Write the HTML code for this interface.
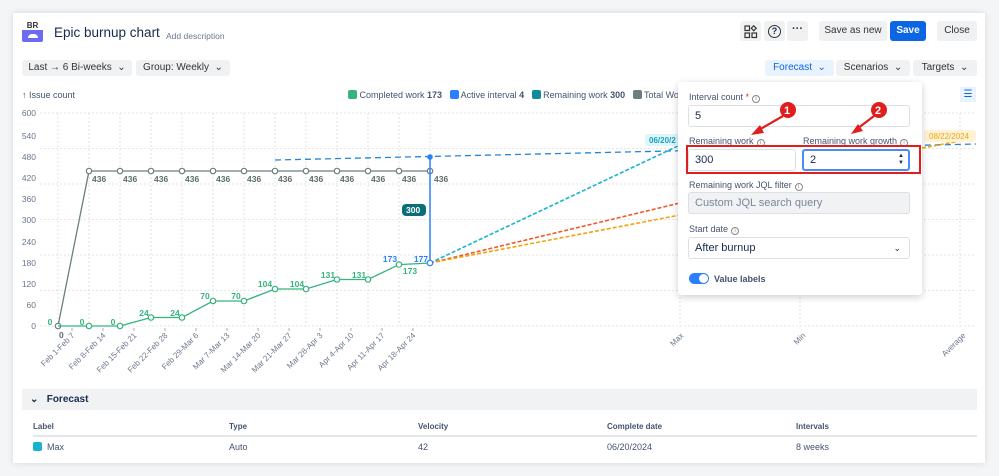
<!DOCTYPE html>
<html><head><meta charset="utf-8"><style>
*{box-sizing:border-box;margin:0;padding:0}
body{width:999px;height:476px;background:#f4f5f6;font-family:"Liberation Sans",sans-serif;color:#172b4d;position:relative;overflow:hidden}
.card{position:absolute;left:13px;top:13px;width:972px;height:450px;background:#fff;box-shadow:0 0 6px rgba(0,0,0,.12)}
.abs{position:absolute}
.btn{position:absolute;background:#f0f1f3;border-radius:3px;font-size:10px;color:#333;text-align:center;white-space:nowrap}
.ff{font-size:9px;color:#44546f}
.inp{position:absolute;border:1px solid #dcdfe4;border-radius:3px;height:22px;font-size:11px;line-height:20px;padding-left:6px;background:#fff}
.lab{position:absolute;font-size:9px;color:#44546f;white-space:nowrap;line-height:10px}
.i{display:inline-block;width:8px;height:8px;border:1px solid #888;border-radius:50%;font-size:6px;line-height:6px;text-align:center;vertical-align:0;margin-left:3px;color:#888}
</style></head><body>
<div class="card"></div>
<!-- logo -->
<div class="abs" style="left:22px;top:22px;width:21px;height:20px;background:#6c6cf0;border-radius:2px"></div>
<div class="abs" style="left:22px;top:21px;width:21px;height:9px;background:#fff;font-size:8px;font-weight:bold;color:#333;text-align:center;line-height:9px">BR</div>
<div class="abs" style="left:28px;top:34px;width:10px;height:4px;background:#fff;border-radius:4px 4px 0 0"></div>
<div class="abs" style="left:54px;top:25px;font-size:13.5px;color:#172b4d">Epic burnup chart</div>
<div class="abs" style="left:166px;top:31px;font-size:8.5px;color:#6b778c">Add description</div>
<!-- top right -->
<div class="btn" style="left:740px;top:21px;width:21px;height:20px"></div>
<svg class="abs" style="left:744px;top:25px" width="14" height="14"><g fill="none" stroke="#333" stroke-width="1.2"><rect x="1" y="1" width="4.5" height="4.5"/><rect x="1" y="8" width="4.5" height="4.5"/><rect x="8" y="8" width="4.5" height="4.5"/><rect x="8" y="1.5" width="3.5" height="3.5" transform="rotate(45 9.75 3.25)"/></g></svg>
<div class="btn" style="left:764px;top:21px;width:21px;height:20px"></div>
<div class="abs" style="left:768px;top:25px;width:13px;height:13px;border:1.3px solid #333;border-radius:50%;font-size:9px;text-align:center;line-height:11px;font-weight:bold">?</div>
<div class="btn" style="left:787px;top:21px;width:21px;height:20px;font-size:11px;line-height:16px;font-weight:bold">···</div>
<div class="btn" style="left:819px;top:21px;width:68px;height:20px;line-height:20px">Save as new</div>
<div class="btn" style="left:890px;top:21px;width:36px;height:20px;line-height:20px;background:#0c66e4;color:#fff;font-weight:bold">Save</div>
<div class="btn" style="left:937px;top:21px;width:40px;height:20px;line-height:20px">Close</div>
<!-- filters -->
<div class="btn" style="left:22px;top:60px;width:110px;height:16px;line-height:16px">Last → 6 Bi-weeks &nbsp;⌄</div>
<div class="btn" style="left:136px;top:60px;width:94px;height:16px;line-height:16px">Group: Weekly &nbsp;⌄</div>
<div class="btn" style="left:765px;top:60px;width:69px;height:16px;line-height:16px;background:#e9f2ff;color:#0c66e4">Forecast &nbsp;⌄</div>
<div class="btn" style="left:836px;top:60px;width:74px;height:16px;line-height:16px">Scenarios &nbsp;⌄</div>
<div class="btn" style="left:913px;top:60px;width:64px;height:16px;line-height:16px">Targets &nbsp;⌄</div>
<div class="abs ff" style="left:22px;top:90px">↑ Issue count</div>
<div class="abs ff" style="left:348px;top:90px;white-space:nowrap">
<span style="display:inline-block;width:9px;height:9px;background:#36b37e;border-radius:2px;vertical-align:-1px"></span> Completed work <b>173</b>&nbsp;&nbsp;
<span style="display:inline-block;width:9px;height:9px;background:#2b7fff;border-radius:2px;vertical-align:-1px"></span> Active interval <b>4</b>&nbsp;&nbsp;
<span style="display:inline-block;width:9px;height:9px;background:#138a9a;border-radius:2px;vertical-align:-1px"></span> Remaining work <b>300</b>&nbsp;&nbsp;
<span style="display:inline-block;width:9px;height:9px;background:#6b7f7f;border-radius:2px;vertical-align:-1px"></span> Total Work</div>
<div class="abs" style="left:960px;top:87px;width:16px;height:15px;background:#e9f2ff;color:#0c66e4;font-size:10px;text-align:center;line-height:15px">☰</div>
<!-- chart -->
<svg class="abs" style="left:0;top:0" width="999" height="390" font-family="Liberation Sans" font-size="8.5">
<g stroke="#ddd" stroke-dasharray="2,2" stroke-width="0.8">
<line x1="40" y1="113" x2="976" y2="113"/><line x1="40" y1="148.5" x2="976" y2="148.5"/><line x1="40" y1="184" x2="976" y2="184"/><line x1="40" y1="219.5" x2="976" y2="219.5"/><line x1="40" y1="255" x2="976" y2="255"/><line x1="40" y1="290.5" x2="976" y2="290.5"/><line x1="40" y1="326" x2="976" y2="326"/>
<line x1="58" y1="113" x2="58" y2="326"/><line x1="89" y1="113" x2="89" y2="326"/><line x1="120" y1="113" x2="120" y2="326"/><line x1="151" y1="113" x2="151" y2="326"/><line x1="182" y1="113" x2="182" y2="326"/><line x1="213" y1="113" x2="213" y2="326"/><line x1="244" y1="113" x2="244" y2="326"/><line x1="275" y1="113" x2="275" y2="326"/><line x1="306" y1="113" x2="306" y2="326"/><line x1="337" y1="113" x2="337" y2="326"/><line x1="368" y1="113" x2="368" y2="326"/><line x1="399" y1="113" x2="399" y2="326"/><line x1="430" y1="113" x2="430" y2="326"/><line x1="680" y1="113" x2="680" y2="326"/><line x1="800" y1="113" x2="800" y2="326"/><line x1="960" y1="113" x2="960" y2="326"/>
</g>
<g fill="#6b778c" text-anchor="end">
<text x="36" y="116">600</text><text x="36" y="139">540</text><text x="36" y="160">480</text><text x="36" y="181">420</text><text x="36" y="202">360</text><text x="36" y="223">300</text><text x="36" y="245">240</text><text x="36" y="266">180</text><text x="36" y="287">120</text><text x="36" y="308">60</text><text x="36" y="329">0</text>
</g>
<g fill="#6b778c" font-size="8" text-anchor="end">
<text transform="translate(75,336) rotate(-45)">Feb 1-Feb 7</text><text transform="translate(106,336) rotate(-45)">Feb 8-Feb 14</text><text transform="translate(137,336) rotate(-45)">Feb 15-Feb 21</text><text transform="translate(168,336) rotate(-45)">Feb 22-Feb 28</text><text transform="translate(199,336) rotate(-45)">Feb 29-Mar 6</text><text transform="translate(230,336) rotate(-45)">Mar 7-Mar 13</text><text transform="translate(261,336) rotate(-45)">Mar 14-Mar 20</text><text transform="translate(292,336) rotate(-45)">Mar 21-Mar 27</text><text transform="translate(323,336) rotate(-45)">Mar 28-Apr 3</text><text transform="translate(354,336) rotate(-45)">Apr 4-Apr 10</text><text transform="translate(385,336) rotate(-45)">Apr 11-Apr 17</text><text transform="translate(416,336) rotate(-45)">Apr 18-Apr 24</text><text transform="translate(684,336) rotate(-45)">Max</text><text transform="translate(806,336) rotate(-45)">Min</text><text transform="translate(966,336) rotate(-45)">Average</text>
</g>
<g stroke="#999" stroke-width="0.8"><line x1="72" y1="328" x2="72" y2="331"/><line x1="103" y1="328" x2="103" y2="331"/><line x1="134" y1="328" x2="134" y2="331"/><line x1="165" y1="328" x2="165" y2="331"/><line x1="196" y1="328" x2="196" y2="331"/><line x1="227" y1="328" x2="227" y2="331"/><line x1="258" y1="328" x2="258" y2="331"/><line x1="289" y1="328" x2="289" y2="331"/><line x1="320" y1="328" x2="320" y2="331"/><line x1="351" y1="328" x2="351" y2="331"/><line x1="382" y1="328" x2="382" y2="331"/><line x1="413" y1="328" x2="413" y2="331"/></g>
<!-- forecast lines -->
<line x1="275" y1="160" x2="976" y2="144" stroke="#2684d6" stroke-width="1.3" stroke-dasharray="6,4"/>
<line x1="430" y1="263" x2="680" y2="145" stroke="#17b3cf" stroke-width="1.6" stroke-dasharray="4,2"/>
<line x1="430" y1="263" x2="680" y2="203" stroke="#ef5a2a" stroke-width="1.6" stroke-dasharray="4,2"/>
<line x1="430" y1="263" x2="680" y2="215" stroke="#f2a30f" stroke-width="1.6" stroke-dasharray="4,2"/>
<line x1="922" y1="148" x2="960" y2="141" stroke="#f2a30f" stroke-width="1.6" stroke-dasharray="4,2"/>
<rect x="645" y="134" width="36" height="12" rx="3" fill="#e0f5fa"/><text x="649" y="143" fill="#17a2c0" font-weight="bold" font-size="8">06/20/2</text>
<rect x="924" y="130" width="52" height="12" rx="3" fill="#fff3d6"/><text x="929" y="139" fill="#f2a30f" font-size="8">08/22/2024</text>
<!-- total -->
<polyline fill="none" stroke="#6b7f7f" stroke-width="1.3" points="58,326 89,171 120,171 151,171 182,171 213,171 244,171 275,171 306,171 337,171 368,171 399,171 430,171"/>
<g fill="#fff" stroke="#6b7f7f" stroke-width="1.2"><circle cx="89" cy="171" r="2.7"/><circle cx="120" cy="171" r="2.7"/><circle cx="151" cy="171" r="2.7"/><circle cx="182" cy="171" r="2.7"/><circle cx="213" cy="171" r="2.7"/><circle cx="244" cy="171" r="2.7"/><circle cx="275" cy="171" r="2.7"/><circle cx="306" cy="171" r="2.7"/><circle cx="337" cy="171" r="2.7"/><circle cx="368" cy="171" r="2.7"/><circle cx="399" cy="171" r="2.7"/><circle cx="430" cy="171" r="2.7"/><circle cx="58" cy="326" r="2.7"/></g>
<g fill="#5e6c6c" font-weight="bold"><text x="92" y="182">436</text><text x="123" y="182">436</text><text x="154" y="182">436</text><text x="185" y="182">436</text><text x="216" y="182">436</text><text x="247" y="182">436</text><text x="278" y="182">436</text><text x="309" y="182">436</text><text x="340" y="182">436</text><text x="371" y="182">436</text><text x="402" y="182">436</text><text x="434" y="182">436</text><text x="59" y="338">0</text></g>
<!-- blue -->
<line x1="430" y1="157" x2="430" y2="263" stroke="#2b7fff" stroke-width="1.5"/>
<circle cx="430" cy="157" r="2.8" fill="#2b7fff"/>
<rect x="402" y="204" width="24" height="12" rx="4" fill="#0b6e78"/><text x="406" y="213" fill="#fff" font-weight="bold">300</text>
<!-- green -->
<polyline fill="none" stroke="#36b37e" stroke-width="1.3" points="58,326 89,326 120,326 151,317.5 182,317.5 213,301 244,301 275,289 306,289 337,279.5 368,279.5 399,264.6 430,263"/>
<g fill="#fff" stroke="#36b37e" stroke-width="1.2"><circle cx="89" cy="326" r="2.7"/><circle cx="120" cy="326" r="2.7"/><circle cx="151" cy="317.5" r="2.7"/><circle cx="182" cy="317.5" r="2.7"/><circle cx="213" cy="301" r="2.7"/><circle cx="244" cy="301" r="2.7"/><circle cx="275" cy="289" r="2.7"/><circle cx="306" cy="289" r="2.7"/><circle cx="337" cy="279.5" r="2.7"/><circle cx="368" cy="279.5" r="2.7"/><circle cx="399" cy="264.6" r="2.7"/></g>
<circle cx="430" cy="263" r="2.7" fill="#fff" stroke="#2b7fff" stroke-width="1.2"/>
<g fill="#36b37e" font-weight="bold" text-anchor="middle"><text x="50" y="325">0</text><text x="82" y="325">0</text><text x="113" y="325">0</text><text x="144" y="316">24</text><text x="175" y="316">24</text><text x="205" y="299">70</text><text x="236" y="299">70</text><text x="265" y="287">104</text><text x="297" y="287">104</text><text x="328" y="278">131</text><text x="359" y="278">131</text><text x="410" y="274">173</text></g>
<g fill="#2b7fff" font-weight="bold" text-anchor="middle"><text x="390" y="262">173</text><text x="421" y="262">177</text></g>
</svg>
<!-- popup -->
<div class="abs" style="left:678px;top:82px;width:244px;height:213px;background:#fff;border-radius:3px;box-shadow:0 2px 8px rgba(0,0,0,.2)"></div>
<div class="lab" style="left:689px;top:92px">Interval count <span style="color:#c9372c">*</span><span class="i">i</span></div>
<div class="inp" style="left:688px;top:105px;width:222px">5</div>
<div class="lab" style="left:689px;top:136px">Remaining work<span class="i">i</span></div>
<div class="lab" style="left:803px;top:136px">Remaining work growth<span class="i">i</span></div>
<div class="inp" style="left:688px;top:149px;width:108px">300</div>
<div class="inp" style="left:802px;top:149px;width:108px;border:2px solid #4c8cf0;line-height:18px">2<span style="position:absolute;right:4px;top:2px;font-size:6px;line-height:7px">▲<br>▼</span></div>
<div class="abs" style="left:686px;top:145px;width:235px;height:29px;border:2px solid #e01e1e"></div>
<div class="lab" style="left:689px;top:180px">Remaining work JQL filter<span class="i">i</span></div>
<div class="inp" style="left:688px;top:192px;width:222px;background:#f1f2f4;color:#7a869a">Custom JQL search query</div>
<div class="lab" style="left:689px;top:224px">Start date<span class="i">i</span></div>
<div class="inp" style="left:688px;top:237px;width:222px">After burnup<span style="position:absolute;right:8px;font-size:9px">⌄</span></div>
<div class="abs" style="left:689px;top:273px;width:20px;height:11px;border-radius:6px;background:#2b7fff"></div>
<div class="abs" style="left:699px;top:274px;width:9px;height:9px;border-radius:50%;background:#fff"></div>
<div class="abs" style="left:714px;top:274px;font-size:9px;font-weight:bold;color:#44546f">Value labels</div>
<!-- annotations -->
<svg class="abs" style="left:740px;top:95px" width="160" height="45"><g fill="#e01e1e" stroke="#e01e1e"><circle cx="48" cy="15" r="8" stroke="none"/><circle cx="139" cy="15" r="8" stroke="none"/><line x1="43" y1="21" x2="17" y2="36" stroke-width="2.2"/><polygon points="11,40 20,30 24,38" stroke="none"/><line x1="134" y1="21" x2="117" y2="34" stroke-width="2.2"/><polygon points="111,39 118,29 123,36" stroke="none"/></g><text x="44" y="19" fill="#fff" font-size="11" font-weight="bold" font-family="Liberation Sans">1</text><text x="135" y="19" fill="#fff" font-size="11" font-weight="bold" font-family="Liberation Sans">2</text></svg>
<!-- forecast table -->
<div class="abs" style="left:22px;top:389px;width:955px;height:21px;background:#f1f2f4;font-size:10px;font-weight:bold;line-height:21px;padding-left:8px">⌄ &nbsp;&nbsp;Forecast</div>
<div class="abs" style="left:33px;top:422px;font-size:8px;font-weight:bold;color:#44546f">Label</div>
<div class="abs" style="left:229px;top:422px;font-size:8px;font-weight:bold;color:#44546f">Type</div>
<div class="abs" style="left:418px;top:422px;font-size:8px;font-weight:bold;color:#44546f">Velocity</div>
<div class="abs" style="left:607px;top:422px;font-size:8px;font-weight:bold;color:#44546f">Complete date</div>
<div class="abs" style="left:796px;top:422px;font-size:8px;font-weight:bold;color:#44546f">Intervals</div>
<div class="abs" style="left:33px;top:435px;width:944px;height:2px;background:#e4e6ea"></div>
<div class="abs" style="left:33px;top:442px;width:9px;height:9px;background:#17b3cf;border-radius:2px"></div>
<div class="abs" style="left:47px;top:442px;font-size:9px;color:#44546f">Max</div>
<div class="abs" style="left:229px;top:442px;font-size:9px;color:#44546f">Auto</div>
<div class="abs" style="left:418px;top:442px;font-size:9px;color:#44546f">42</div>
<div class="abs" style="left:607px;top:442px;font-size:9px;color:#44546f">06/20/2024</div>
<div class="abs" style="left:796px;top:442px;font-size:9px;color:#44546f">8 weeks</div>
</body></html>
